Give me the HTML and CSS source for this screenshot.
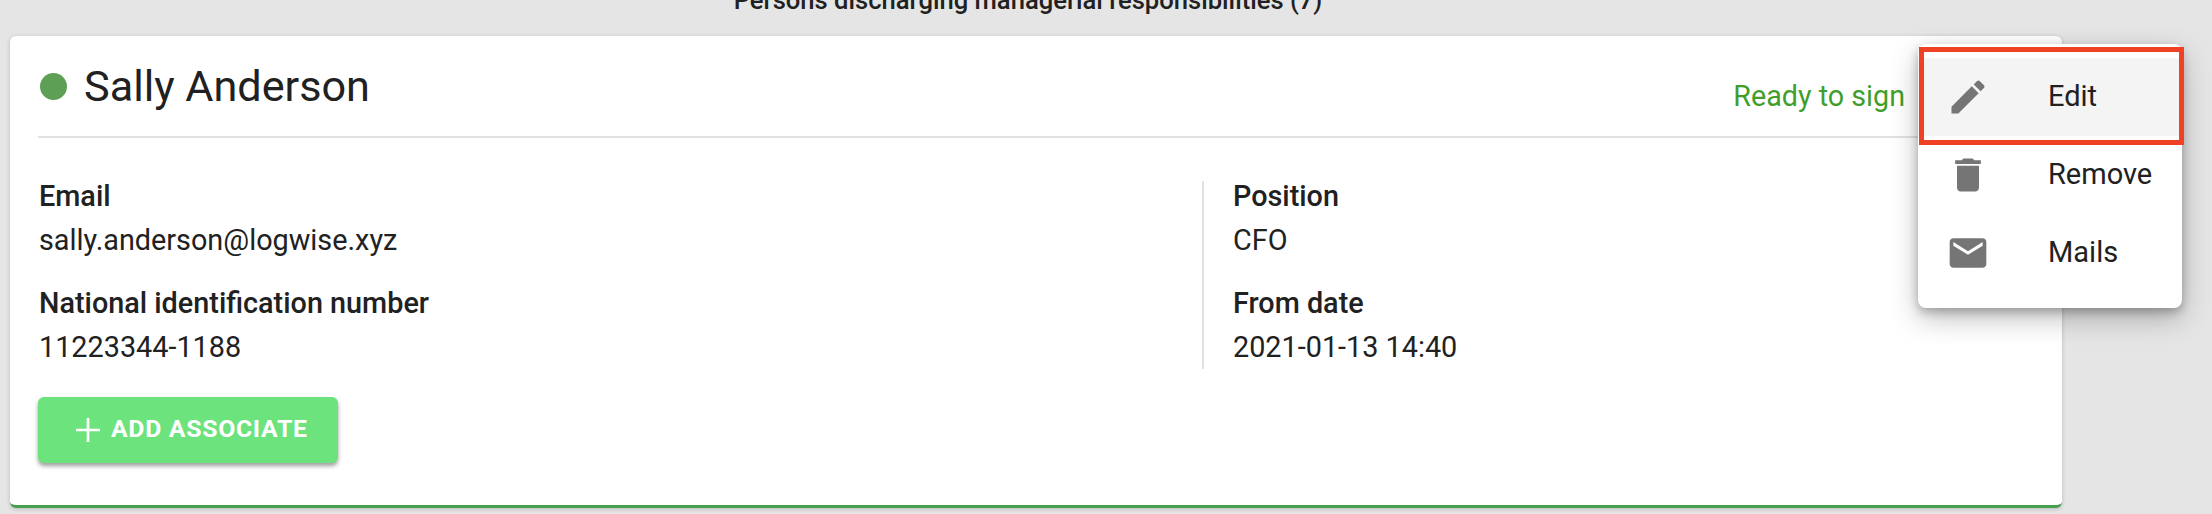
FILE: index.html
```html
<!DOCTYPE html>
<html lang="en">
<head>
<meta charset="utf-8">
<title>Persons discharging managerial responsibilities</title>
<link rel="stylesheet" href="styles.css">
</head>
<body>
<main class="page">
  <h2 class="section-title">Persons discharging managerial responsibilities (7)</h2>
  <section class="card">
    <header class="card-head">
      <div class="person">
        <span class="dot"></span>
        <h1 class="name">Sally Anderson</h1>
      </div>
      <span class="status">Ready to sign</span>
    </header>
    <div class="details">
      <div class="col">
        <div class="field"><div class="label">Email</div><div class="value">sally.anderson@logwise.xyz</div></div>
        <div class="field"><div class="label">National identification number</div><div class="value">11223344-1188</div></div>
      </div>
      <div class="col col-right">
        <div class="field"><div class="label">Position</div><div class="value">CFO</div></div>
        <div class="field"><div class="label">From date</div><div class="value">2021-01-13 14:40</div></div>
      </div>
    </div>
    <button class="add-btn" type="button">
      <svg class="plus" viewBox="0 0 24 24"><path d="M11 3h2v8h8v2h-8v8h-2v-8H3v-2h8z"/></svg>
      <span>ADD ASSOCIATE</span>
    </button>
  </section>
</main>
<nav class="menu">
  <div class="menu-item active">
    <svg class="menu-icon" viewBox="0 0 24 24"><path d="M3 17.25V21h3.75L17.81 9.94l-3.75-3.75L3 17.25zM20.71 7.04c.39-.39.39-1.02 0-1.41l-2.34-2.34c-.39-.39-1.02-.39-1.41 0l-1.83 1.83 3.75 3.75 1.83-1.83z"/></svg>
    <span class="menu-text">Edit</span>
  </div>
  <div class="menu-item">
    <svg class="menu-icon" viewBox="0 0 24 24"><path d="M6 19c0 1.1.9 2 2 2h8c1.1 0 2-.9 2-2V7H6v12zM19 4h-3.5l-1-1h-5l-1 1H5v2h14V4z"/></svg>
    <span class="menu-text">Remove</span>
  </div>
  <div class="menu-item">
    <svg class="menu-icon" viewBox="0 0 24 24"><path d="M20 4H4c-1.1 0-1.99.9-1.99 2L2 18c0 1.1.9 2 2 2h16c1.1 0 2-.9 2-2V6c0-1.1-.9-2-2-2zm0 4l-8 5-8-5V6l8 5 8-5v2z"/></svg>
    <span class="menu-text">Mails</span>
  </div>
</nav>
<div class="highlight"></div>
</body>
</html>
```
FILE: styles.css
```css
* { box-sizing: border-box; }
html, body { margin: 0; height: 100%; }
body {
  background: #e5e5e5;
  font-family: Roboto, "Liberation Sans", sans-serif;
  color: #212121;
  overflow: hidden;
  position: relative;
}
.page { padding: 0 150px 0 10px; }
.section-title {
  margin: -16px 0 0;
  height: 52px;
  padding-right: 16px;
  line-height: 33px;
  font-size: 25.6px;
  font-weight: 500;
  text-align: center;
}
.card {
  height: 472px;
  padding: 0 28px;
  background: #fff;
  border-radius: 6px;
  border-bottom: 3px solid #47a04d;
  box-shadow: 0 1px 4px rgba(0,0,0,.2);
}
.card-head {
  height: 102px;
  display: flex;
  justify-content: space-between;
  padding-right: 129px;
  border-bottom: 2px solid #e2e2e2;
}
.person { display: flex; align-items: center; gap: 17px; height: 100px; padding-top: 1px; }
.dot { width: 27px; height: 27px; border-radius: 50%; background: #5c9f55; margin-left: 2px; }
.name { margin: 0; font-size: 43.2px; font-weight: 400; line-height: 50px; }
.status { font-size: 28.7px; color: #3f9f2a; line-height: 34px; margin-top: 43px; }
.details { display: flex; margin-top: 43px; }
.col { flex: none; width: 1164px; height: 188px; }
.col-right { border-left: 2px solid #e2e2e2; padding-left: 29px; width: 800px; }
.col:first-child .field { padding-left: 1px; }
.field { height: 107px; }
.label { font-size: 28.8px; font-weight: 500; line-height: 30px; }
.value { font-size: 28.8px; line-height: 30px; margin-top: 14px; }
.add-btn {
  display: flex;
  align-items: center;
  gap: 7px;
  margin-top: 28px;
  width: 300px;
  height: 66px;
  padding: 0 0 3px 34px;
  border: 0;
  border-radius: 6px;
  background: #6ce37c;
  color: #fff;
  font-family: inherit;
  font-size: 24.8px;
  font-weight: 700;
  letter-spacing: .7px;
  box-shadow: 0 3px 4px rgba(0,0,0,.38);
}
.plus { width: 32px; height: 32px; fill: #fff; flex: none; margin-top: 3px; }
.menu {
  position: absolute;
  left: 1918px;
  top: 44px;
  width: 264px;
  height: 264px;
  padding-top: 14px;
  background: #fff;
  border-radius: 8px;
  box-shadow: 0 10px 28px rgba(0,0,0,.26), 0 4px 10px rgba(0,0,0,.24);
}
.menu-item {
  display: flex;
  align-items: center;
  height: 78px;
  padding-left: 28px;
  font-size: 29px;
}
.menu-item.active { background: #f4f4f4; }
.menu-icon { width: 44px; height: 44px; fill: #757575; margin-right: 58px; flex: none; }
.menu-text { padding-bottom: 3px; }
.highlight {
  position: absolute;
  left: 1919px;
  top: 47px;
  width: 265px;
  height: 98px;
  border: 5px solid #ef4123;
}
```
